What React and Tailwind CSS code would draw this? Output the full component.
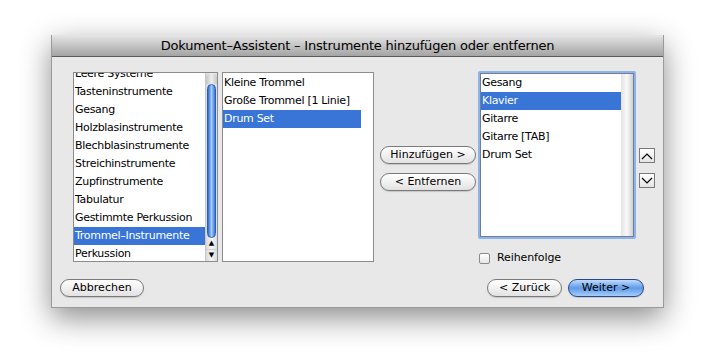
import React from "react";

const FONT = { fontFamily: '"DejaVu Sans", "Liberation Sans", sans-serif' };

function Row({ children, selected, className = "" }) {
  return (
    <div
      className={
        "h-[18px] leading-[18px] pl-[1px] whitespace-nowrap text-[11px] tracking-[-0.3px] " +
        (selected ? "bg-[#3875d7] text-white " : "text-black ") +
        className
      }
    >
      {children}
    </div>
  );
}

function AquaButton({ children, className = "", blue = false }) {
  return (
    <div
      className={
        "h-[18px] rounded-full border flex items-center justify-center text-[11px] tracking-[0px] text-black " +
        (blue
          ? "border-[#24488a] bg-gradient-to-b from-[#c2dcfb] via-[#5f9ae8] to-[#a6cdfa] "
          : "border-[#7a7a7a] bg-gradient-to-b from-[#ffffff] via-[#f1f1f1] to-[#e2e2e2] ") +
        "shadow-[0_1px_1px_rgba(0,0,0,0.15)] " +
        className
      }
    >
      {children}
    </div>
  );
}

function Chevron({ up }) {
  return (
    <svg width="12" height="8" viewBox="0 0 12 8">
      <polyline
        points={up ? "1,7 6,2 11,7" : "1,1 6,6 11,1"}
        fill="none"
        stroke="#000"
        strokeWidth="1.2"
      />
    </svg>
  );
}

export default function App() {
  const left = [
    "Tasteninstrumente",
    "Gesang",
    "Holzblasinstrumente",
    "Blechblasinstrumente",
    "Streichinstrumente",
    "Zupfinstrumente",
    "Tabulatur",
    "Gestimmte Perkussion",
    "Trommel–Instrumente",
    "Perkussion",
  ];
  return (
    <div className="w-[712px] h-[362px] bg-white pt-[35px] pl-[51px]" style={FONT}>
      <div className="w-[613px] h-[273px] bg-[#e8e8e8] border-x border-b border-[#9a9a9a] shadow-[0_10px_28px_rgba(0,0,0,0.45)] flex flex-col">
        {/* Title bar */}
        <div className="h-[22px] rounded-t-[4px] bg-gradient-to-b from-[#e6e6e6] via-[#c4c4c4] to-[#a4a4a4] border-b border-[#5a5a5a] flex items-center justify-center text-[13px] tracking-[-0.2px] text-black">
          Dokument–Assistent – Instrumente hinzufügen oder entfernen
        </div>

        {/* Top row */}
        <div className="flex items-start h-[191px] mt-[15px] pl-[21px]">
          {/* Left list */}
          <div className="w-[145px] h-[190px] border border-[#8c8c8c] bg-white flex overflow-hidden">
            <div className="flex-1 overflow-hidden">
              <div className="-mt-[8px]">
                <Row>Leere Systeme</Row>
                {left.map((t) => (
                  <Row key={t} selected={t === "Trommel–Instrumente"}>
                    {t}
                  </Row>
                ))}
              </div>
            </div>
            <div className="w-[12px] h-full flex flex-col border-l border-[#c8c8c8] bg-gradient-to-r from-[#d9d9d9] via-[#f6f6f6] to-[#dcdcdc]">
              <div className="h-[11px] rounded-t-full bg-gradient-to-r from-[#c4c4c4] via-[#eeeeee] to-[#c8c8c8]" />
              <div className="flex-1 mx-[1px] rounded-full bg-gradient-to-r from-[#2b6bcf] via-[#a7cbf6] to-[#3677d6] border border-[#2a5fb8]" />
              <div className="h-[11px] flex items-center justify-center text-[7px] leading-none">▲</div>
              <div className="h-[12px] flex items-center justify-center text-[7px] leading-none border-t border-[#cfcfcf]">▼</div>
            </div>
          </div>

          {/* Middle list */}
          <div className="w-[152px] h-[190px] ml-[4px] border border-[#8c8c8c] bg-white pr-[12px] pt-[1px]">
            <Row>Kleine Trommel</Row>
            <Row>Große Trommel [1 Linie]</Row>
            <Row selected>Drum Set</Row>
          </div>

          {/* Buttons */}
          <div className="w-[96px] ml-[6px] mt-[74px] flex flex-col gap-[9px]">
            <AquaButton>Hinzufügen &gt;</AquaButton>
            <AquaButton>&lt; Entfernen</AquaButton>
          </div>

          {/* Right column */}
          <div className="w-[158px] ml-[2px] -mt-[1px] flex flex-col">
            <div className="h-[168px] border-2 border-[#8fb3e8] rounded-[2px]">
              <div className="h-full border border-[#6c7f9c] bg-white flex">
                <div className="flex-1">
                  <Row>Gesang</Row>
                  <Row selected>Klavier</Row>
                  <Row>Gitarre</Row>
                  <Row>Gitarre [TAB]</Row>
                  <Row>Drum Set</Row>
                </div>
                <div className="w-[12px] h-full bg-gradient-to-r from-[#e4e4e4] via-[#f9f9f9] to-[#cfcfcf]" />
              </div>
            </div>
            <div className="flex items-center mt-[14px] ml-[1px] h-[11px]">
              <div className="w-[11px] h-[11px] border border-[#8a8a8a] rounded-[2px] bg-gradient-to-b from-white to-[#e6e6e6]" />
              <span className="ml-[7px] text-[11px] tracking-[-0.1px] text-black">Reihenfolge</span>
            </div>
          </div>

          {/* Arrow column */}
          <div className="w-[16px] ml-[3px] mt-[76px] flex flex-col gap-[10px]">
            <div className="h-[15px] border border-[#7a7a7a] bg-gradient-to-b from-white to-[#e4e4e4] flex items-center justify-center">
              <Chevron up />
            </div>
            <div className="h-[15px] border border-[#7a7a7a] bg-gradient-to-b from-white to-[#e4e4e4] flex items-center justify-center">
              <Chevron />
            </div>
          </div>
        </div>

        {/* Bottom row */}
        <div className="flex items-center mt-[16px] pl-[8px] pr-[19px]">
          <AquaButton className="w-[84px]">Abbrechen</AquaButton>
          <div className="flex-1" />
          <AquaButton className="w-[75px]">&lt; Zurück</AquaButton>
          <AquaButton blue className="w-[76px] ml-[6px]">Weiter &gt;</AquaButton>
        </div>
      </div>
    </div>
  );
}
